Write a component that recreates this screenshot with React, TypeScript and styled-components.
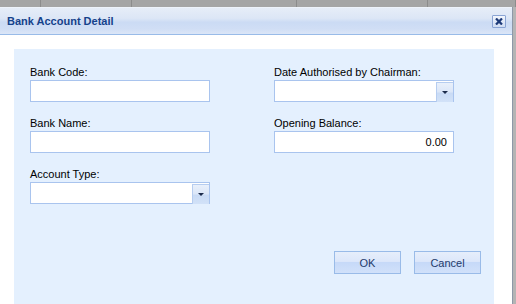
import styled, { createGlobalStyle } from "styled-components";

const GlobalStyle = createGlobalStyle`
  html, body {
    margin: 0;
    padding: 0;
    background: #a8a8a8;
  }
  body {
    font-family: "Liberation Sans", Arial, sans-serif;
    font-size: 11px;
  }
`;

const Desktop = styled.div`
  display: flex;
  flex-direction: column;
  width: 516px;
  height: 304px;
  overflow: hidden;
  background: #b4b4b4;
`;

const GridStrip = styled.div`
  display: grid;
  grid-template-columns: 41px 91px 165px 131px 1fr;
  height: 7px;
  flex-shrink: 0;
`;

const StripCell = styled.div`
  background: #a5a5a5;
  border-right: 1px solid #8c8c8c;
`;

const Window = styled.div`
  display: flex;
  flex-direction: column;
  flex: 1;
  width: 512px;
  background: #fff;
  border-right: 1px solid #8e98a8;
`;

const Header = styled.div`
  display: flex;
  align-items: center;
  justify-content: space-between;
  height: 26px;
  padding: 0 6px 0 7px;
  border-top: 1px solid #eef3fb;
  border-bottom: 1px solid #99bbe8;
  background: linear-gradient(
    to bottom,
    #e6edf8 0%,
    #dce6f6 40%,
    #cbdbf4 55%,
    #d0def5 80%,
    #dbe6f7 100%
  );
`;

const Title = styled.span`
  font-weight: bold;
  font-size: 11px;
  color: #15428b;
`;

const CloseButton = styled.div`
  display: flex;
  align-items: center;
  justify-content: center;
  width: 12px;
  height: 11px;
  border: 1px solid #8aa4d4;
  border-radius: 1px;
  background: linear-gradient(to bottom, #f2f6fd, #cfdcf2);
`;

const Body = styled.div`
  display: flex;
  flex: 1;
  padding: 14px 18px 0 14px;
`;

const Panel = styled.div`
  display: flex;
  flex-direction: column;
  flex: 1;
  padding: 15px 13px 0 16px;
  background: #e4f0fe;
`;

const Form = styled.div`
  display: grid;
  grid-template-columns: 180px 180px;
  column-gap: 64px;
  align-items: start;
`;

const Column = styled.div`
  display: flex;
  flex-direction: column;
  gap: 13px;
`;

const Field = styled.div`
  display: flex;
  flex-direction: column;
`;

const Label = styled.label`
  height: 16px;
  line-height: 16px;
  color: #000;
  white-space: nowrap;
`;

const TextInput = styled.input<{ $align?: "left" | "right" }>`
  box-sizing: border-box;
  width: 180px;
  height: 22px;
  margin: 0;
  padding: 0 6px;
  border: 1px solid #a9c4ee;
  background: #fff;
  font-family: "Liberation Sans", Arial, sans-serif;
  font-size: 11px;
  color: #000;
  text-align: ${(p) => p.$align || "left"};
  outline: none;
`;

const Combo = styled.div`
  display: flex;
  justify-content: flex-end;
  box-sizing: border-box;
  width: 180px;
  height: 22px;
  padding: 1px 0 0;
  border: 1px solid #a9c4ee;
  background: #fff;
`;

const Trigger = styled.div`
  display: flex;
  align-items: center;
  justify-content: center;
  box-sizing: border-box;
  width: 17px;
  height: 20px;
  border: 1px solid #b6cdf0;
  border-right: none;
  border-bottom: none;
  background: linear-gradient(to bottom, #e9f0fb 0%, #dce7f8 45%, #c9dbf5 55%, #d2e2f8 100%);
`;

const Arrow = styled.span`
  width: 0;
  height: 0;
  border-left: 3px solid transparent;
  border-right: 3px solid transparent;
  border-top: 3px solid #1b2b4b;
`;

const Footer = styled.div`
  display: flex;
  justify-content: flex-end;
  gap: 13px;
  margin-top: 47px;
`;

const Button = styled.button`
  box-sizing: border-box;
  width: 67px;
  height: 23px;
  padding: 0;
  border: 1px solid #99bbe8;
  background: linear-gradient(
    to bottom,
    #e6eefb 0%,
    #dce7fa 45%,
    #c6d9f8 50%,
    #d1e1fa 100%
  );
  font-family: "Liberation Sans", Arial, sans-serif;
  font-size: 11px;
  color: #233a6b;
`;

const ComboBox = () => (
  <Combo>
    <Trigger>
      <Arrow />
    </Trigger>
  </Combo>
);

export default function App() {
  return (
    <>
      <GlobalStyle />
      <Desktop>
        <GridStrip>
          <StripCell />
          <StripCell />
          <StripCell />
          <StripCell />
          <StripCell />
        </GridStrip>
        <Window>
          <Header>
            <Title>Bank Account Detail</Title>
            <CloseButton>
              <svg width="8" height="7" viewBox="0 0 8 7">
                <path d="M1 0.5 L7 6.5 M7 0.5 L1 6.5" stroke="#1d3a78" strokeWidth="2.2" />
              </svg>
            </CloseButton>
          </Header>
          <Body>
            <Panel>
              <Form>
                <Column>
                  <Field>
                    <Label>Bank Code:</Label>
                    <TextInput readOnly />
                  </Field>
                  <Field>
                    <Label>Bank Name:</Label>
                    <TextInput readOnly />
                  </Field>
                  <Field>
                    <Label>Account Type:</Label>
                    <ComboBox />
                  </Field>
                </Column>
                <Column>
                  <Field>
                    <Label>Date Authorised by Chairman:</Label>
                    <ComboBox />
                  </Field>
                  <Field>
                    <Label>Opening Balance:</Label>
                    <TextInput readOnly $align="right" defaultValue="0.00" />
                  </Field>
                </Column>
              </Form>
              <Footer>
                <Button>OK</Button>
                <Button>Cancel</Button>
              </Footer>
            </Panel>
          </Body>
        </Window>
      </Desktop>
    </>
  );
}
